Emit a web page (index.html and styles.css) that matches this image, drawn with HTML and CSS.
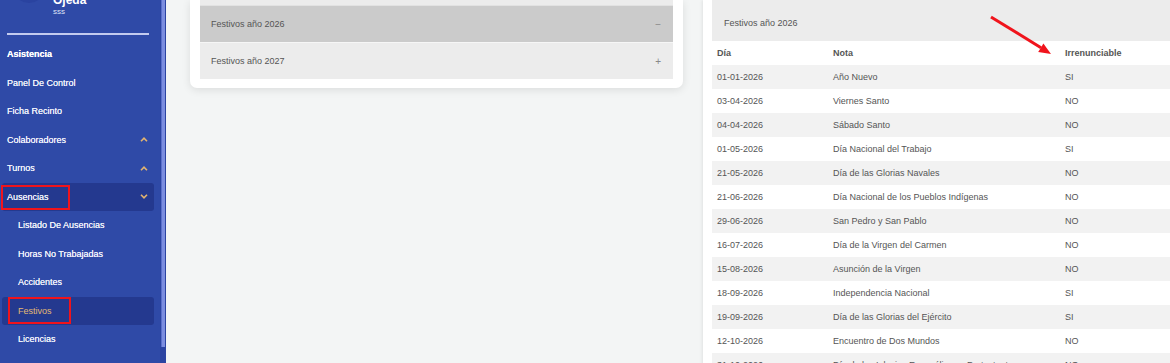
FILE: index.html
```html
<!DOCTYPE html>
<html lang="es">
<head>
    <meta charset="UTF-8">
    <meta name="viewport" content="width=device-width, initial-scale=1.0">
    <title>Festivos</title>
    <link rel="stylesheet" href="styles.css">
</head>
<body>
    <div class="app">
        <!-- Sidebar -->
        <aside class="sidebar">
            <div class="profile">
                <div class="avatar"></div>
                <div class="user">
                    <div class="user-name">Ojeda</div>
                    <div class="user-role">sss</div>
                </div>
            </div>
            <div class="divider"></div>

            <ul class="menu">
                <li class="menu-title">Asistencia</li>
                <li class="menu-item">Panel De Control</li>
                <li class="menu-item">Ficha Recinto</li>
                <li class="menu-item">Colaboradores
                    <svg class="chev" viewBox="0 0 8 5"><polyline points="1,4.2 4,1.2 7,4.2"/></svg>
                </li>
                <li class="menu-item">Turnos
                    <svg class="chev" viewBox="0 0 8 5"><polyline points="1,4.2 4,1.2 7,4.2"/></svg>
                </li>
                <li class="menu-item open">Ausencias
                    <svg class="chev" viewBox="0 0 8 5"><polyline points="1,0.8 4,3.8 7,0.8"/></svg>
                    <span class="mark mark-ausencias"></span>
                </li>
                <li class="menu-item sub">Listado De Ausencias</li>
                <li class="menu-item sub">Horas No Trabajadas</li>
                <li class="menu-item sub">Accidentes</li>
                <li class="menu-item sub active">Festivos
                    <span class="mark mark-festivos"></span>
                </li>
                <li class="menu-item sub">Licencias</li>
            </ul>
        </aside>
        <div class="sidebar-scroll"><div class="thumb"></div></div>

        <!-- Main -->
        <main class="main">
            <section class="card card-left">
                <div class="acc-tail"></div>
                <div class="acc-head current">
                    <span>Festivos año 2026</span>
                    <span class="sign">&minus;</span>
                </div>
                <div class="acc-head">
                    <span>Festivos año 2027</span>
                    <span class="sign">+</span>
                </div>
            </section>

            <section class="card card-right">
                <div class="acc-head wide">
                    <span>Festivos año 2026</span>
                    <span class="sign">&minus;</span>
                </div>
                <table class="holidays">
                    <thead>
                        <tr><th class="col-day">Día</th><th class="col-note">Nota</th><th>Irrenunciable</th></tr>
                    </thead>
                    <tbody>
                        <tr><td>01-01-2026</td><td>Año Nuevo</td><td>SI</td></tr>
                        <tr><td>03-04-2026</td><td>Viernes Santo</td><td>NO</td></tr>
                        <tr><td>04-04-2026</td><td>Sábado Santo</td><td>NO</td></tr>
                        <tr><td>01-05-2026</td><td>Día Nacional del Trabajo</td><td>SI</td></tr>
                        <tr><td>21-05-2026</td><td>Día de las Glorias Navales</td><td>NO</td></tr>
                        <tr><td>21-06-2026</td><td>Día Nacional de los Pueblos Indígenas</td><td>NO</td></tr>
                        <tr><td>29-06-2026</td><td>San Pedro y San Pablo</td><td>NO</td></tr>
                        <tr><td>16-07-2026</td><td>Día de la Virgen del Carmen</td><td>NO</td></tr>
                        <tr><td>15-08-2026</td><td>Asunción de la Virgen</td><td>NO</td></tr>
                        <tr><td>18-09-2026</td><td>Independencia Nacional</td><td>SI</td></tr>
                        <tr><td>19-09-2026</td><td>Día de las Glorias del Ejército</td><td>SI</td></tr>
                        <tr><td>12-10-2026</td><td>Encuentro de Dos Mundos</td><td>NO</td></tr>
                        <tr><td>31-10-2026</td><td>Día de las Iglesias Evangélicas y Protestantes</td><td>NO</td></tr>
                    </tbody>
                </table>

                <!-- red annotation arrow -->
                <svg class="arrow" viewBox="0 0 80 50">
                    <line x1="8" y1="7" x2="58" y2="37.7"/>
                    <polygon points="68,44 55.2,42 60.4,33.4"/>
                </svg>
            </section>
        </main>
    </div>
</body>
</html>
```

FILE: styles.css
```css
body {
    margin: 0;
    font-family: "Liberation Sans", Arial, sans-serif;
    overflow: hidden;
}

.app {
    display: flex;
    height: 363px;
    overflow: hidden;
}

/* Sidebar */
.sidebar {
    width: 160px;
    flex-shrink: 0;
    background-color: #2f4aa7;
    color: #eef1fb;
}

.profile {
    display: flex;
    align-items: flex-start;
    gap: 8px;
    height: 33px;
    padding-left: 13px;
}

.avatar {
    width: 32px;
    height: 32px;
    margin-top: -29px;
    border-radius: 50%;
    background-color: #2a43a0;
}

.user {
    margin-top: -7px;
}

.user-name {
    font-size: 12px;
    font-weight: bold;
    line-height: 14px;
    color: #fff;
}

.user-role {
    font-size: 8px;
    line-height: 10px;
    color: #dfe4f7;
}

.divider {
    height: 2px;
    margin: 0 11px 0 7px;
    background-color: #c3cbef;
}

.menu {
    list-style: none;
    margin: 5px 0 0 0;
    padding: 0;
}

.menu li {
    position: relative;
    display: flex;
    align-items: center;
    justify-content: space-between;
    height: 28.5px;
    margin: 0 6px 0 2px;
    padding: 0 5px;
    font-size: 9px;
    border-radius: 3px;
    text-shadow: 0 0 0.4px #fff;
}

.menu-title {
    font-weight: bold;
    color: #fff;
}

.menu-item.sub {
    padding-left: 16px;
}

.menu-item.open,
.menu-item.active {
    background-color: #24398f;
}

.menu-item.active {
    color: #e2b873;
    text-shadow: none;
}

.chev {
    width: 8px;
    height: 5px;
    margin-right: 1px;
    fill: none;
    stroke: #e3b46f;
    stroke-width: 1.6;
}

/* red annotation boxes */
.mark {
    position: absolute;
    border: 2px solid #f0141c;
    box-sizing: border-box;
}

.mark-ausencias {
    left: -1px;
    top: 2px;
    width: 69px;
    height: 25px;
}

.mark-festivos {
    left: 6px;
    top: 0;
    width: 63px;
    height: 27px;
}

.sidebar-scroll {
    width: 6px;
    flex-shrink: 0;
    background-color: #2b44a2;
}

.sidebar-scroll .thumb {
    height: 347px;
    margin-left: 1px;
    width: 4px;
    background-color: #7c8ee0;
    border-left: 1px solid #5a70cc;
    box-sizing: border-box;
}

/* Main */
.main {
    flex-grow: 1;
    display: flex;
    align-items: flex-start;
    gap: 20px;
    padding-left: 24px;
    background-color: #f3f5f5;
    min-width: 0;
}

.card {
    background-color: #fff;
    flex-shrink: 0;
}

.card-left {
    width: 473px;
    padding: 0 10px 9px 10px;
    border-radius: 0 0 7px 7px;
    box-shadow: 0 2px 8px rgba(0, 0, 0, 0.1);
}

.acc-tail {
    height: 5px;
    background-color: #ececec;
}

.acc-head {
    display: flex;
    justify-content: space-between;
    align-items: center;
    height: 36px;
    padding: 0 12px 0 11px;
    background-color: #ececec;
    color: #555;
    font-size: 9px;
    border-top: 1px solid #f6f6f6;
}

.acc-head.current {
    background-color: #cbcbcb;
    border-top: 1px solid #e2e2e2;
}

.sign {
    color: #888;
    font-size: 10px;
}

.card-right {
    position: relative;
    width: 490px;
    padding-left: 9px;
    box-shadow: -1px 0 3px rgba(0, 0, 0, 0.08);
}

.acc-head.wide {
    height: 36px;
    padding-top: 5px;
    border-top: none;
    padding-left: 12px;
}

.holidays {
    width: 100%;
    border-collapse: collapse;
    font-size: 9px;
    color: #555;
}

.holidays th,
.holidays td {
    height: 24px;
    padding: 0 5px;
    text-align: left;
    white-space: nowrap;
}

.holidays th {
    font-weight: bold;
    color: #555;
}

.holidays .col-day {
    width: 106px;
}

.holidays .col-note {
    width: 222px;
}

.holidays tbody tr:nth-child(odd) {
    background-color: #f2f2f2;
}

.arrow {
    position: absolute;
    left: 280px;
    top: 10px;
    width: 80px;
    height: 50px;
}

.arrow line {
    stroke: #f0141c;
    stroke-width: 3;
}

.arrow polygon {
    fill: #f0141c;
}
```
